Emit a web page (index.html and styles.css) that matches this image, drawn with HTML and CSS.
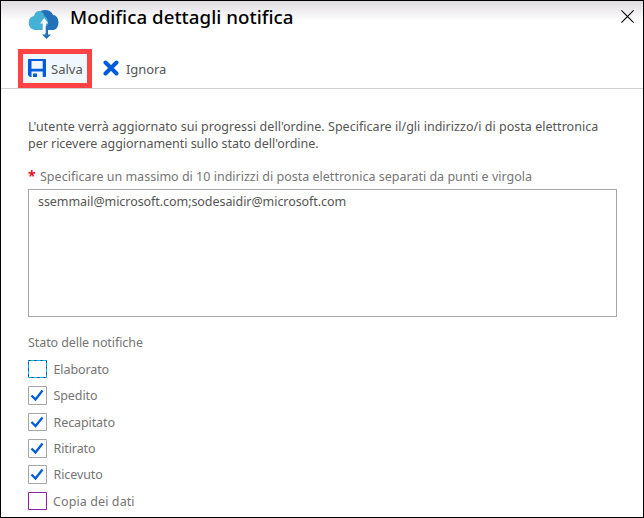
FILE: index.html
```html
<!DOCTYPE html>
<html lang="it">
<head>
<meta charset="utf-8">
<title>Modifica dettagli notifica</title>
<link rel="stylesheet" href="styles.css">
</head>
<body>
<main class="panel">
  <header class="header">
    <svg class="logo" width="32" height="32" viewBox="0 0 32 32">
      <path d="M10 18V5Q12 1 17 1Q23 1 25 6Q30 7 30.500 13Q30.500 20 25 21H14Z" fill="#2272b9"/>
      <path d="M7 21Q1 20 .7 14Q.7 8 6 7Q7 3 10 2Q15 2 16.500 7Q19 8 20 12L19 21Z" fill="#45b1d5"/>
      <path d="M16.500 7Q19 8 20 12V21H25Q30 19 30 13Q30 7 25 6L20 4Z" fill="#2272b9"/>
      <path d="M16.200 9L20.300 14.500H18V21H14.800V14.500H12Z" fill="#fff"/>
      <path d="M17.300 17H20V25.500H23L18.500 30L14 25.500H17.300Z" fill="#2272b9"/>
      <path d="M15.200 13H17.600V24H15.200Z" fill="#fff"/>
    </svg>
    <h1 class="title">Modifica dettagli notifica</h1>
    <svg class="close" width="13" height="13" viewBox="0 0 13 13"><path d="M.4.4L12.600 12.600M12.600.4L.4 12.600" stroke="#000" stroke-width="1.100"/></svg>
  </header>
  <nav class="toolbar">
    <button class="command save">
      <svg class="disk" width="18" height="18" viewBox="0 0 18 18"><path fill="#015cda" fill-rule="evenodd" d="M1 0H17Q18 0 18 1V17Q18 18 17 18H14.700V12.500H3.500V18H2L0 16V1Q0 0 1 0ZM3.500 2V9.800H14.700V2ZM5 14.500H9V18H5Z"/></svg>
      <span class="save-text">Salva</span>
    </button>
    <button class="command discard">
      <svg class="cross" width="16" height="16" viewBox="0 0 16 16"><path d="M2.500 2.500L13.500 13.500M13.500 2.500L2.500 13.500" stroke="#015cda" stroke-width="4" stroke-linecap="round"/></svg>
      <span class="discard-text">Ignora</span>
    </button>
  </nav>
  <section class="content">
    <p class="intro"><span class="intro-first">L'utente verrà aggiornato sui progressi dell'ordine. Specificare il/gli indirizzo/i di posta elettronica</span><br><span class="intro-second">per ricevere aggiornamenti sullo stato dell'ordine.</span></p>
    <div class="label"><span class="required">*</span><span class="label-text">Specificare un massimo di 10 indirizzi di posta elettronica separati da punti e virgola</span></div>
    <div class="emails">ssemmail@microsoft.com;sodesaidir@microsoft.com</div>
    <h2 class="status-title">Stato delle notifiche</h2>
    <div class="statuses">
      <div class="status"><svg class="box" viewBox="0 0 19 19"><path d="M.5.5H18.500V17.500H.5Z" fill="#fff" stroke="#00b7f4"/><path d="M.5.5H18.500V17.500H.5Z" fill="none" stroke="#163e66" stroke-dasharray="2 4"/></svg><span>Elaborato</span></div>
      <div class="status"><svg class="box" viewBox="0 0 19 19"><path d="M.5.5H18.500V18.500H.5Z" fill="#fff" stroke="#a6a6a6"/><path d="M3.500 9.500L7.500 13.500L14.500 4.500" fill="none" stroke="#015cda" stroke-width="2.300"/></svg><span>Spedito</span></div>
      <div class="status"><svg class="box" viewBox="0 0 19 19"><path d="M.5.5H18.500V17.500H.5Z" fill="#fff" stroke="#a6a6a6"/><path d="M3.500 9L7.500 13L14.500 4.500" fill="none" stroke="#015cda" stroke-width="2.300"/></svg><span>Recapitato</span></div>
      <div class="status"><svg class="box" viewBox="0 0 19 19"><path d="M.5.5H18.500V18.500H.5Z" fill="#fff" stroke="#a6a6a6"/><path d="M3.500 9.500L7.500 13.500L14.500 4.500" fill="none" stroke="#015cda" stroke-width="2.300"/></svg><span>Ritirato</span></div>
      <div class="status"><svg class="box" viewBox="0 0 19 19"><path d="M.5.5H18.500V18.500H.5Z" fill="#fff" stroke="#a6a6a6"/><path d="M3.500 9.500L7.500 13.500L14.500 4.500" fill="none" stroke="#015cda" stroke-width="2.300"/></svg><span>Ricevuto</span></div>
      <div class="status"><svg class="box" viewBox="0 0 19 19"><path d="M.5.5H18.500V17.500H.5Z" fill="#fff" stroke="#8b23a8"/></svg><span>Copia dei dati</span></div>
    </div>
  </section>
</main>
</body>
</html>
```
FILE: styles.css
```css
* { box-sizing: border-box; }
body { margin: 0; font: 13px/17px "Noto Sans", "Open Sans", sans-serif; color: #555; }
.panel { height: 518px; border: 1px solid #000; background: linear-gradient(#dfdbe0, #fff 20px); overflow: hidden; }
.header { display: flex; align-items: flex-start; height: 48px; padding: 8px 9px 0 27px; }
.logo { flex: none; }
.title { margin: -4px 0 0 10px; font-size: 18.700px; line-height: 24px; font-weight: 500; letter-spacing: .04px; color: #000; white-space: nowrap; }
.close { margin: 1px 0 0 auto; }
.toolbar { display: flex; height: 40px; padding-left: 17px; border-bottom: 1px solid #d0d0d0; }
.command { display: flex; align-items: center; height: 39px; padding: 0; border: 0; background: none; font: 13px/18px "Noto Sans", sans-serif; color: #555; white-space: nowrap; }
.disk { margin-top: -1px; }
.cross { margin-top: -2px; }
.save { width: 74px; padding-left: 5px; border: 5px solid #ff4244; background: #f0f7fe; }
.save-text { margin-left: 5px; }
.discard { margin-left: 11px; }
.discard-text { margin-left: 7px; letter-spacing: -.1px; }
.content { padding: 29px 26px 0 27px; }
.intro { margin: 0; white-space: nowrap; font-size: 12.500px; }
.intro-first { letter-spacing: .03px; }
.intro-second { letter-spacing: -.03px; }
.label { display: flex; height: 37px; padding-top: 16px; color: #757575; font-size: 12.500px; white-space: nowrap; }
.required { width: 12px; color: #e81123; font-size: 14px; font-weight: 700; line-height: 16px; }
.label-text { letter-spacing: .01px; }
.emails { height: 128px; padding: 3px 9px; border: 1px solid #a6a6a6; background: #fff; font-size: 12.500px; letter-spacing: -.06px; }
.status-title { margin: 17px 0 0; font-size: 12.500px; line-height: 18px; font-weight: 400; color: #757575; letter-spacing: -.08px; }
.statuses { display: grid; grid-auto-rows: 26.350px; margin-top: 8px; color: #757575; font-size: 12.500px; letter-spacing: -.1px; }
.status { display: flex; align-items: flex-start; gap: 6.500px; line-height: 19px; white-space: nowrap; }
.status:last-child { gap: 6px; letter-spacing: .1px; }
.box { width: 19px; height: 19px; flex: none; }
```
